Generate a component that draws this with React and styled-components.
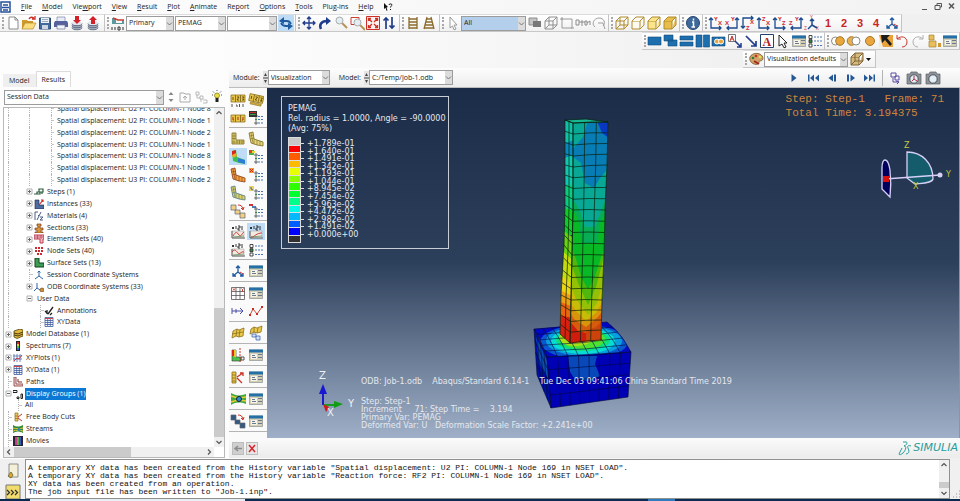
import styled, { createGlobalStyle } from "styled-components";

const GlobalStyle = createGlobalStyle`
  * {
    box-sizing: border-box;
  }

  body {
    margin: 0;
    background: #f0f0f0;
    color: #222;
    font-family: "Open Sans", "Noto Sans", sans-serif;
    font-size: 7px;
    line-height: 10px;
  }

  button,
  select {
    font: inherit;
    color: inherit;
  }

  button {
    padding: 0;
    border: 0;
    background: none;
  }
`;

/* ---------- layout ---------- */

const Window = styled.div`
  display: flex;
  flex-direction: column;
  height: 100vh;
  overflow: hidden;
  background: linear-gradient(90deg, #fdfdfd 20%, #f0f0f0 80%);
`;

const MenuBar = styled.nav`
  display: flex;
  align-items: center;
  gap: 10px;
  height: 14px;
  padding: 0 3px 0 1px;
  background: linear-gradient(90deg, #fdfdfd, #f2f2f2);

  & > button {
    white-space: nowrap;
  }
`;

const WindowControls = styled.div`
  display: flex;
  gap: 1px;
  margin-left: auto;
`;

const ToolRow = styled.div`
  display: flex;
  justify-content: ${(props) => props.$align || "flex-start"};
  height: 18px;
`;

const ToolGroup = styled.div`
  display: flex;
  align-items: center;
  height: 18px;
  padding-right: ${(props) => props.$end || 2}px;
  border-right: 1px solid #c4c4c4;
  border-top: 1px solid #dcdcdc;
  border-bottom: 1px solid #c8c8c8;
  background: linear-gradient(#ffffff, #f1f1f1);
`;

const Grip = styled.span`
  width: 2px;
  height: 12px;
  margin: 0 1px 0 2px;
  border-left: 2px dotted #a8a8a8;
`;

const DockGap = styled.span`
  width: 84px;
`;

const ToolButton = styled.button`
  display: flex;
  align-items: center;
  justify-content: center;
  flex: none;
  width: ${(props) => props.$w || 16}px;
  height: 16px;
  background: ${(props) => (props.$active ? "#bfdcf7" : "none")};

  svg {
    flex: none;
  }
`;

const ViewNumber = styled(ToolButton)`
  color: #c8261c;
  font-family: "Liberation Sans", Arial, sans-serif;
  font-size: 11px;
  font-weight: bold;
`;

const SelectBox = styled.div`
  display: grid;
  grid-template-columns: 1fr 7px;
  width: ${(props) => props.$w}px;
  height: 15px;
  margin-right: 1px;
  border: 1px solid #9c9c9c;
  background: ${(props) => props.$bg || "#fff"};

  select {
    grid-area: 1 / 1 / 2 / 3;
    min-width: 0;
    padding: 0 8px 0 2px;
    border: 0;
    background: transparent;
    appearance: none;
    outline: none;
  }

  svg {
    grid-area: 1 / 2 / 2 / 3;
    width: 7px;
    height: 100%;
    background: #dcdcdc;
    pointer-events: none;
  }
`;

const Body = styled.main`
  display: flex;
  flex: 1;
  min-height: 0;
`;

/* ---------- results tree ---------- */

const Sidebar = styled.aside`
  display: flex;
  flex-direction: column;
  width: 226px;
  padding: 3px 1px 0 3px;
`;

const Tabs = styled.div`
  display: flex;
  align-items: flex-end;
  height: 16px;
`;

const Tab = styled.button`
  height: ${(props) => (props.$active ? 16 : 13)}px;
  padding: 0 5px;
  border: 1px solid ${(props) => (props.$active ? "#dcdcdc" : "#efefef")};
  border-bottom: 0;
  background: ${(props) => (props.$active ? "#fff" : "#efefef")};
`;

const TreeTools = styled.div`
  display: flex;
  align-items: center;
  height: 20px;
  padding-left: 1px;
`;

const TreeBox = styled.div`
  display: grid;
  grid-template-columns: 1fr 10px;
  grid-template-rows: 1fr 10px;
  flex: 1;
  min-height: 0;
  border: 1px solid #b8b8b8;
  background: #fff;
`;

const TreeView = styled.div`
  display: flex;
  overflow: hidden;
`;

const Tree = styled.ul`
  display: flex;
  flex-direction: column;
  flex: 1;
  min-width: 0;
  margin: -5px 0 0;
  padding: 0;
  list-style: none;
`;

const TreeRow = styled.li`
  display: flex;
  align-items: center;
  flex: 1;
  min-height: 0;

  & > svg {
    flex: none;
  }
`;

const Guide = styled.span`
  align-self: stretch;
  flex: none;
  width: ${(props) => props.$w || 17}px;
  margin-left: ${(props) => props.$x || 4}px;
  border-left: 1px dotted #b4b4b4;
`;

const Elbow = styled(Guide)`
  background: linear-gradient(#c4c4c4, #c4c4c4) no-repeat 0 50% / 3px 1px;
`;

const Toggle = styled.button`
  display: flex;
  flex: none;
  justify-content: center;
  width: 9px;
`;

const TreeLabel = styled.span`
  margin-left: 2px;
  padding: 0 1px;
  line-height: 12px;
  white-space: nowrap;
  background: ${(props) => (props.$selected ? "#0a78d4" : "none")};
  color: ${(props) => (props.$selected ? "#fff" : "inherit")};
`;

const ScrollBar = styled.div`
  display: flex;
  flex-direction: ${(props) => (props.$horizontal ? "row" : "column")};
  align-items: center;
  justify-content: space-between;
  background: #f0f0f0;

  span {
    flex: ${(props) => props.$thumb};
    align-self: stretch;
    background: #cbcbcb;
  }

  i {
    flex: ${(props) => props.$rest};
  }
`;

/* ---------- viewport ---------- */

const Workspace = styled.section`
  display: flex;
  flex-direction: column;
  flex: 1;
  min-width: 0;
  padding-left: 3px;
`;

const ContextBar = styled.div`
  display: flex;
  align-items: center;
  height: 20px;
  padding: 0 19px 0 4px;
  background: linear-gradient(#fdfdfd, #ececec);
  border-bottom: 1px solid #bdbdbd;

  label {
    margin-right: 3px;
  }
`;

const ModelPicker = styled.div`
  display: flex;
  align-items: center;
  margin-left: 8px;
`;

const Playback = styled.div`
  display: flex;
  gap: 3px;
  margin-left: auto;
`;

const Divider = styled.span`
  width: 1px;
  margin: 0 1px;
  background: #b4b4b4;
`;

const Stage = styled.div`
  display: flex;
  flex: 1;
  min-height: 0;
`;

const Toolbox = styled.div`
  display: flex;
  flex-direction: column;
  width: 38px;
  padding-top: 1px;
  overflow: hidden;
  background: #fafafa;
`;

const ToolSection = styled.div`
  display: grid;
  grid-template-columns: 18px 18px;
  gap: 1px 0;
  flex: none;
  padding: ${(props) => (props.$loose ? "2px 0 2px" : "2px 0 1px")};
  border-bottom: 1px solid #b4b4b4;

  & > button {
    width: 18px;
    height: 17px;
  }
`;

const Canvas = styled.div`
  position: relative;
  flex: 1;
  border-right: 1px solid #8a94a4;
  background: linear-gradient(#1b2c48 0%, #2d405b 50%, #9fafc8 100%);
  color: #e4e8ee;
  font-family: "DejaVu Sans", Verdana, sans-serif;
  font-size: 8px;
  line-height: 8px;
`;

const Legend = styled.div`
  position: absolute;
  top: 8px;
  left: 14px;
  width: 168px;
  padding: 7px 6px 5px;
  border: 1px solid #c9ced6;
  line-height: 10px;

  p {
    margin: 0;
    white-space: nowrap;
  }
`;

const Scale = styled.div`
  display: flex;
  height: 106px;
  margin-top: 3px;
`;

const Swatches = styled.div`
  display: flex;
  flex-direction: column;
  width: 13px;
  border: 1px solid #dcdcdc;
`;

const Swatch = styled.span`
  flex: 1;
  background: ${(props) => props.$color};

  & + & {
    border-top: 1px solid #dcdcdc;
  }
`;

const Ticks = styled.div`
  display: flex;
  flex-direction: column;
  padding: 3px 0 5px;
`;

const Tick = styled.span`
  display: flex;
  align-items: center;
  gap: 3px;
  flex: 1;
  min-height: 0;
  line-height: 7px;

  &::before {
    content: "";
    width: 3px;
    height: 1px;
    background: #dcdcdc;
  }
`;

const FrameInfo = styled.div`
  position: absolute;
  top: 4px;
  right: 15px;
  color: #cf853c;
  font-family: "Liberation Mono", "Courier New", monospace;
  font-size: 11px;
  line-height: 14px;
  white-space: pre;
`;

const StateBlock = styled.div`
  position: absolute;
  bottom: 8px;
  left: 94px;
  white-space: pre;

  p {
    margin: 0;
  }

  p:first-child {
    margin-bottom: 12px;
  }
`;

const Compass = styled.svg`
  position: absolute;
  top: 50px;
  right: 4px;
  width: 78px;
  height: 64px;
`;

const Triad = styled.svg`
  position: absolute;
  bottom: 16px;
  left: 48px;
  width: 44px;
  height: 54px;
`;

const ModelHolder = styled.div`
  position: absolute;
  inset: 0;
  display: flex;
  justify-content: center;
  padding: 27px 62px 0 0;
  pointer-events: none;

  svg {
    width: 105px;
    height: 297px;
  }
`;

const PromptBar = styled.div`
  display: flex;
  align-items: center;
  gap: 2px;
  height: 20px;
  padding: 0 2px 0 3px;
  background: linear-gradient(#fbfbfb, #ebebeb);
`;

const PromptButton = styled.button`
  display: flex;
  width: 12px;
  height: 13px;
  border: 1px solid #bdbdbd;
  background: ${(props) => props.$bg};
`;

const Brand = styled.div`
  display: flex;
  align-items: center;
  margin-left: auto;
  color: #2a9c9c;
  font-family: "DejaVu Sans", Verdana, sans-serif;
  font-size: 11px;
  font-style: italic;
`;

/* ---------- message area ---------- */

const MessageArea = styled.footer`
  display: flex;
  height: 40px;
  margin-top: 1px;
  background: #f0f0f0;
`;

const MessageButtons = styled.div`
  display: flex;
  flex-direction: column;
  align-items: center;
  justify-content: space-between;
  width: 25px;
  padding-top: 4px;
`;

const MessageLog = styled.div`
  display: grid;
  grid-template-columns: 1fr 10px;
  flex: 1;
  min-width: 0;
  border: 1px solid #8f8f8f;
  background: #fff;

  pre {
    margin: 0;
    padding: 4px 2px 0;
    overflow: hidden;
    color: #111;
    font-family: "Liberation Mono", "Courier New", monospace;
    font-size: 8px;
    line-height: 8px;
  }
`;

const SizeGrip = styled.div`
  display: flex;
  align-items: flex-end;
  width: 10px;
`;

const TaskBar = styled.div`
  display: grid;
  grid-template-columns: 30px 215px 1fr 27px 285px;
  height: 2px;
  background: #0b2a52;

  & > :nth-child(2) {
    background: #e8eef4;
  }

  & > :nth-child(4) {
    background: #2e7cc0;
  }
`;

/* ---------- icons ---------- */

const Svg = ({ size = 16, children }) => (
  <svg width={size} height={size} viewBox={`0 0 ${size} ${size}`} fill="none" aria-hidden="true">
    {children}
  </svg>
);

const Chevron = () => (
  <svg viewBox="0 0 7 12" fill="none" aria-hidden="true">
    <path d="M1 5l2.500 2.500L6 5" stroke="#777" />
  </svg>
);

const Disks = ({ up }) => (
  <>
    <path d="M3 8v4c0 3 10 3 10 0V8z" fill="#a9b0bd" />
    <path d="M3 8.500c0 3 10 3 10 0M3 10.500c0 3 10 3 10 0M3 12.500c0 3 10 3 10 0" stroke="#5c6984" />
    <ellipse cx="8" cy="8" rx="5" ry="2" fill="#e2e5ea" />
    <path d={up ? "M8 1l4 4h-2v4H6V5H4z" : "M6 1h4v4h2L8 9 4 5h2z"} fill="#d3202a" />
  </>
);

const Cube = ({ front = "none", stroke = "#b08a2c", wire }) => (
  <>
    <path d="M2 6h8v8H2z" fill={front} stroke={stroke} />
    <path d="M2 6l4-4h8l-4 4M14 2v8l-4 4" fill={front} stroke={stroke} />
    {wire && <path d="M6 2v8h8M6 10l-4 4" stroke={stroke} />}
  </>
);

const Lens = () => (
  <>
    <path d="M9 8l5 5" stroke="#b4945a" strokeWidth="2" />
    <circle cx="6.500" cy="5.500" r="3.500" fill="#e4edf2" stroke="#a8acb0" />
  </>
);

const axisPaths = {
  normal: "M3 4v9h10M1 5l2-2 2 2M11 11l2 2-2 2",
  flip: "M3 13h10V4M5 11l-2 2 2 2M11 5l2-2 2 2",
  down: "M3 13V3h10M1 11l2 2 2-2M11 1l2 2-2 2",
};

const Axes = ({ a, b, kind = "normal" }) => (
  <>
    <path d={axisPaths[kind]} stroke="#1b4a8f" strokeWidth="1.300" />
    <g fill="#cc3340" fontSize="6" fontWeight="bold">
      <text x={kind === "flip" ? 7 : 6} y={kind === "down" ? 15 : 6}>{a}</text>
      <text x={kind === "flip" ? 1 : 10} y={kind === "down" ? 9 : 10}>{b}</text>
    </g>
  </>
);

const Dialog = () => (
  <>
    <path d="M1.500 3h13v10.500h-13z" fill="#d4cfb4" stroke="#7b8588" strokeWidth=".6" />
    <path d="M1 2.500h14v3H1z" fill="#236fa6" />
    <path d="M3 7h6v5H3z" fill="#f7f5ea" />
    <path d="M4 8.500h3M4 10.500h4M10 7.500h4M10 10.500h4" stroke="#6a7890" strokeWidth="1.200" />
  </>
);

const OptionList = () => (
  <>
    <path d="M2 2.500h3v3H2zM2 11h3v3H2z" fill="#fff" stroke="#222" strokeWidth=".8" />
    <path d="M2 6.700h3v3H2z" fill="#3f8a3c" stroke="#222" strokeWidth=".8" />
    <path d="M7 4h8M7 8h8M7 12.500h8" stroke="#4a76b8" strokeWidth="1.200" strokeDasharray="2 1" />
  </>
);

const SmallList = ({ children }) => (
  <>
    {children}
    <path d="M7 5h2v2H7zM7 12h2v2H7z" stroke="#333" strokeWidth=".7" />
    <path d="M7 8.500h2v2H7z" fill="#3f8a3c" />
    <path d="M10 6.500h5M10 9.500h5M10 13h5" stroke="#4a76b8" strokeDasharray="2 1" />
  </>
);

const Bracket = ({ fill, mesh = "#7c6c1c", bent }) => (
  <>
    <path d={bent ? "M1 2l4-1 1 7 9 3v4l-6-1-6-2z" : "M2 2h4v7h8v4H2z"} fill={fill} stroke={mesh} strokeWidth=".8" />
    <path
      d={bent ? "M2 5l4-1M2 8l4-1M3 2l2 10M6 8v5M9 9v5M12 10v4" : "M2 5h4M2 7.500h4M4 2v11M2 11h12M7 9v4M9.500 9v4M12 9v4"}
      stroke={mesh}
      strokeWidth=".6"
    />
  </>
);

const FrameStrip = ({ tilt }) => (
  <g transform={tilt ? "rotate(12 8 8)" : undefined}>
    <path d="M1 3h14v7H1z" fill="#e8c64a" stroke="#8d7220" strokeWidth=".8" />
    <path d="M5.500 3v7M10.500 3v7" stroke="#8d7220" />
    <path d="M3 5v3M7 5h2l-2 3h2M12 5h2l-1 1.500 1 1.500h-2" stroke="#5c4710" strokeWidth=".9" />
    {tilt ? (
      <path d="M3 11h11v2H3z" fill="#d8ac34" stroke="#8d7220" strokeWidth=".6" />
    ) : (
      <path d="M2 12v3M6 13h1v2M9.500 12v3M13 12v3" stroke="#444" strokeWidth=".9" />
    )}
  </g>
);

const Curve = ({ d }) => (
  <>
    <path d="M2 7h12v7H2z" fill="#f1e9e2" stroke="#a9a9a9" strokeWidth=".6" />
    <path d="M2 3l2 2M4 3L2 5M6 2v3M8 2h2v2H8v2h2M12 2v4" stroke="#222" strokeWidth=".9" />
    <path d="M2 7v7h13" stroke="#666" />
    <path d={d} stroke="#c83c32" />
    <path d="M3 13l11-1" stroke="#4a8a4a" strokeWidth=".7" />
  </>
);

const Frames = ({ fill }) => (
  <>
    <path d="M1 2h5v5H1zM5 7h5v4H5zM10 10h5v5h-5z" fill={fill} stroke="#5f6470" strokeWidth=".7" />
    <path d="M8 2c3 0 4 1 5 4M11 5l2 2 1-3" stroke="#cc3328" />
  </>
);

const Films = ({ d }) => <path d={d} fill="#1d6fae" stroke="#134a7c" strokeWidth=".6" />;

const Camera = ({ mark }) => (
  <>
    <path d="M1 4h3l1-2h6l1 2h3v10H1z" fill="#8d9298" stroke="#5b6066" strokeWidth=".7" />
    <circle cx="8" cy="9" r="4.200" fill="#e3edf5" stroke="#4b5058" />
    {mark && <path d="M8 6v3l-2 2M8 9l3 2" stroke="#b23048" />}
  </>
);

const play = "#245796";

const icons = {
  app: (
    <>
      <path d="M3 3h9v10H3z" fill="#fff" stroke="#26509c" strokeWidth="1.500" />
      <path d="M5 6h5M4 8.500h7M5 11h5" stroke="#26509c" strokeWidth="1.500" />
    </>
  ),
  helpArrow: (
    <>
      <path d="M2 4l4 4-1.500.5 1 3-1 .3-1-3L2 10z" fill="#111" />
      <path d="M7 6c0-1.500 3-1.500 3 0 0 1-1.500 1-1.500 2.500M8.500 10v1" stroke="#111" />
    </>
  ),
  minimize: <path d="M3 9.500h5" stroke="#555" />,
  restore: <path d="M3 5.500h5v4H3zM5 5V3.500h4.500V7H8" stroke="#555" />,
  close: <path d="M4 3.500l5 5M9 3.500l-5 5" stroke="#555" strokeWidth="1.500" />,
  new: <path d="M4 2h6l3 3v9H4zM10 2v3h3" fill="#fff" stroke="#8b8b8b" />,
  open: (
    <>
      <path d="M1 5h5l1 1h5v8H1z" fill="#cf9a2c" />
      <path d="M4 8h11l-3 6H1z" fill="#fadd7c" stroke="#a87c20" strokeWidth=".6" />
      <path d="M8 4c1-2 3-2 5-1M14 1v3h-3" stroke="#cc3026" strokeWidth="1.300" />
    </>
  ),
  save: (
    <>
      <path d="M2.500 3h11v11h-11z" fill="#3f6a9e" stroke="#2b4b76" />
      <path d="M4 3h8v5H4z" fill="#eceff3" />
      <path d="M5 4.500h6M5 6.500h6" stroke="#8d9cb4" strokeWidth=".8" />
      <path d="M5 10h6v4H5z" fill="#ccd5e0" />
    </>
  ),
  print: (
    <>
      <path d="M4 2h8v5H4z" fill="#e6ecf8" stroke="#7c86a4" strokeWidth=".7" />
      <path d="M2 6h12l1 2v4H1V8z" fill="#54619c" />
      <path d="M4 10h8v4H4z" fill="#f2f4fa" stroke="#6a749c" strokeWidth=".7" />
    </>
  ),
  import: <Disks />,
  export: <Disks up />,
  field: (
    <>
      <path d="M2 3h4v5h6V5h2v4H2z" fill="#5c9aa0" />
      <path d="M3 3l5 2h6" stroke="#cc3c30" strokeWidth="1.500" />
      <path d="M2 12v3M5 12v3M8 12h2v3H8zM13 12v3" stroke="#333" />
    </>
  ),
  sync: (
    <>
      <path d="M3 6h6c2 0 3 1 4 3M13 11H8c-3 0-4-1-5-3" stroke="#1d5a9e" strokeWidth="1.800" />
      <path d="M1 6l5-4v7zM15 11l-5 4V8z" fill="#1d5a9e" />
    </>
  ),
  move: <path d="M8 2v12M2 8h12M6 4l2-2 2 2M6 12l2 2 2-2M4 6L2 8l2 2M12 6l2 2-2 2" stroke="#1f3c8c" strokeWidth="1.300" />,
  rotate: (
    <>
      <path d="M4 14c-2-4 0-8 6-8" stroke="#1f3c8c" strokeWidth="2.500" />
      <path d="M9 2l5 4-5 4z" fill="#1f3c8c" />
    </>
  ),
  zoom: <Lens />,
  zoomBox: (
    <>
      <path d="M2 2.500h8v7H2z" stroke="#cc3c30" />
      <g transform="translate(2 2)">
        <Lens />
      </g>
    </>
  ),
  fit: (
    <>
      <path d="M1.500 1.500h13v13h-13z" fill="#fdf0ee" stroke="#cc3026" />
      <path d="M3.500 6V3.500H6M10 3.500h2.500V6M12.500 10v2.500H10M6 12.500H3.500V10M4 4l3 3M12 4L9 7M12 12L9 9M4 12l3-3" stroke="#cc3026" strokeWidth="1.300" />
    </>
  ),
  cycle: <path d="M5 14V3M2.500 5.500L5 3l2.500 2.500M11 2v11M8.500 10.500L11 13l2.500-2.500" stroke="#1f3c8c" strokeWidth="1.700" />,
  ladder: <path d="M4 2v12M12 2v12M4 4h8M4 7h8M4 10h8M4 13h8" stroke="#8c6c2c" strokeWidth="1.300" />,
  ladderPersp: <path d="M6 2L3 14M10 2l3 12M5.500 4h5M5 7h6M4 10h8M3 13h10" stroke="#8c6c2c" strokeWidth="1.300" />,
  pick: <path d="M5 2l7 8H9l2 4-2 .8L7.500 11 5 13z" fill="#fff" stroke="#9a9a9a" />,
  shade: (
    <>
      <path d="M2 3h8v7H2z" fill="#c4c4c4" stroke="#8c8c8c" />
      <path d="M6 6h8v6H6z" fill="#787878" />
    </>
  ),
  ghostCube: <Cube stroke="#909090" wire />,
  ghostBox: <path d="M3 4h10v9H3zM1 4h3M3 2v3M12 13h3" stroke="#9a9a9a" />,
  ghostDots: <path d="M1 5h3v5H1zM4 7h3M7 5v6M7 7h3M10 6h2v4h-2zM12 8l3-2v4" stroke="#8c8c8c" />,
  ghostLoop: <path d="M4 12c-4-3-1-9 4-9s7 5 4 8M7 8h5l2 6" stroke="#a0a0a0" />,
  cubeWire: <Cube wire />,
  cubeHidden: <Cube front="#fdfaf0" />,
  cubeLight: <Cube front="#fbe58c" />,
  cubeFill: <Cube front="#e9bd4a" />,
  info: (
    <>
      <circle cx="8" cy="8" r="6.500" fill="#3c689c" stroke="#24466f" />
      <path d="M8.500 3.500v2M7 7h1.500v5M6.500 12H10" stroke="#fff" strokeWidth="1.500" />
    </>
  ),
  axYX: <Axes a="Y" b="X" />,
  axXY: <Axes a="Y" b="X" kind="flip" />,
  axZX: <Axes a="Z" b="X" kind="down" />,
  axZX2: <Axes a="Z" b="X" />,
  axYZ: <Axes a="Y" b="Z" />,
  axZY: <Axes a="Y" b="Z" kind="flip" />,
  iso: (
    <>
      <path d="M8 5v5l-4 4M8 10l5 3M6 6l2-2 2 2" stroke="#1b4a8f" strokeWidth="1.500" />
      <g fill="#cc3340" fontSize="5">
        <text x="6" y="4">Y</text>
        <text x="0" y="15">Z</text>
        <text x="12" y="15">X</text>
      </g>
    </>
  ),
  csys: (
    <>
      <path d="M8 3v6l-5 4M8 9l5 4M6 5l2-2 2 2M3 10v3h3M10 13h3v-3" stroke="#1d5aa0" strokeWidth="1.300" />
      <path d="M10 9l3 2" stroke="#cc3340" />
    </>
  ),
  winOne: <Films d="M1 4h13v8H1z" />,
  winCascade: <Films d="M1 2h9v6H1zM5 7h9v6H5z" />,
  winRows: <Films d="M1 3h13v4H1zM1 9h13v4H1z" />,
  winCols: <Films d="M1 2h6v12H1zM8.500 2h6v12h-6z" />,
  overlay: (
    <>
      <Films d="M1 4h13v9H1z" />
      <circle cx="6" cy="8.500" r="2.500" fill="#e8a53c" stroke="#fff" />
      <circle cx="10" cy="8.500" r="2.500" stroke="#fff" fill="#e8a53c" />
    </>
  ),
  textArrow: (
    <>
      <path d="M1.500 1.500h7v7h-7z" fill="#fff" stroke="#777" />
      <path d="M3 8l2-5 2 5M4 6h2" stroke="#c02828" />
      <path d="M8 8l6 6M14 10v4h-4" stroke="#1f3c8c" strokeWidth="1.500" />
    </>
  ),
  arrow: <path d="M3 3l10 10M13 8v5H8" stroke="#1f3c8c" strokeWidth="1.700" />,
  textBox: (
    <>
      <path d="M1.500 1.500h13v13h-13z" fill="#fff" stroke="#26406c" />
      <text x="3.500" y="12.500" fill="#b02020" fontSize="12" fontWeight="bold" fontFamily="Liberation Serif">A</text>
    </>
  ),
  cursor: <path d="M4 2l8 8H9l2 4-2 .8L7 11l-3 2z" fill="#fff" stroke="#222" />,
  dialog: <Dialog />,
  list: <OptionList />,
  either: (
    <>
      <circle cx="5.500" cy="8" r="4" fill="#fff" stroke="#8c8c7c" />
      <circle cx="10" cy="8" r="4.300" fill="#e9a83c" stroke="#a5762a" />
    </>
  ),
  both: (
    <>
      <circle cx="5.500" cy="8" r="4.300" fill="#e9b050" stroke="#a5762a" />
      <circle cx="10" cy="8" r="4" fill="#fff" stroke="#8c8c7c" />
    </>
  ),
  dot: <circle cx="8" cy="8" r="4.500" fill="#eaa63c" stroke="#a8762a" />,
  replace: (
    <>
      <path d="M1 2h14v12H1z" fill="#e8a23c" />
      <path d="M1 2l4 12H1z" fill="#f5ead6" />
      <path d="M3 2h9L9 5l5 6-2 2-5-6-3 3z" fill="#1c1c1c" />
    </>
  ),
  undo: <path d="M3 6c4-4 10-2 10 3 0 3-2 5-5 5M3 2v4h4" stroke="#c8382c" />,
  redo: <path d="M13 6C9 2 3 4 3 9c0 3 2 5 5 5M13 2v4H9" stroke="#b0b0b0" />,
  groups: (
    <>
      <path d="M3 2h5v5H3zM3 8h7v6H3z" fill="#e9bd5a" stroke="#a88438" strokeWidth=".7" />
      <path d="M12 10h3v4h-3z" fill="#d39a34" />
    </>
  ),
  palette: (
    <>
      <path d="M2 6c2-5 12-5 13 1 0 4-4 2-4 4s-2 3-5 2-5-4-4-7z" fill="#d2a468" stroke="#77552c" strokeWidth=".8" />
      <circle cx="5" cy="7" r="1.300" fill="#2c7c3c" />
      <circle cx="8" cy="5" r="1.300" fill="#cc2c28" />
      <circle cx="12" cy="6" r="1.300" fill="#e8e04c" />
      <path d="M6 10l5 3" stroke="#a02820" strokeWidth="2" />
    </>
  ),
  cubeBrown: <Cube front="#d6b97c" stroke="#7f6436" wire />,
  caret: <path d="M5 7h5l-2.500 3z" fill="#111" />,
  play: <path d="M5.500 4l5 4-5 4z" fill={play} />,
  first: <path d="M3 4.500h1.500v7H3zM9 4.500v7L5 8zM14 4.500v7L10 8z" fill={play} />,
  prev: <path d="M9 4.500v7L4.500 8zM10 4.500h2v7h-2z" fill={play} />,
  next: <path d="M4 4.500h2v7H4zM7.500 4.500v7L12 8z" fill={play} />,
  last: <path d="M2 4.500v7L6 8zM7 4.500v7l4-3.500zM11.500 4.500H13v7h-1.500z" fill={play} />,
  link: <path d="M4 3h5v4H4zM8 6h4v4H8zM6 8v4h6M9 11l3 1-2 2" stroke="#5a4ca0" />,
  snapshot: <Camera mark />,
  camera: <Camera />,
  updown: <path d="M5.500 6L8 3l2.500 3zM5.500 10L8 13l2.500-3z" fill="#888" />,
  folderUp: <path d="M3 4h4l1 1h5v8H3zM8 11V7M6 9l2-2 2 2" stroke="#aaa" />,
  branch: <path d="M3 3h3v3H3zM7 7h3v3H7zM10 11h4v3h-4M4 6v3h3M8 10v3" stroke="#aaa" strokeWidth=".8" />,
  bulb: (
    <>
      <path d="M8 2v-1M3 6h1M12 6h1M4 2.500l1 1M12 2.500l-1 1" stroke="#555" />
      <circle cx="8" cy="6.500" r="2.500" fill="#e9e23c" stroke="#77731c" strokeWidth=".7" />
      <path d="M6.500 9h3v4h-3z" fill="#222" />
    </>
  ),
  frames: <FrameStrip />,
  framesTilt: <FrameStrip tilt />,
  framesRow: (
    <>
      <path d="M1 5h14v7H1z" fill="#e8c64a" stroke="#8d7220" strokeWidth=".8" />
      <path d="M5.500 5v7M10.500 5v7" stroke="#8d7220" />
      <path d="M3 7v3h1M8 7v3M13 7v3h-1" stroke="#a8301c" />
    </>
  ),
  superimpose: (
    <SmallList>
      <path d="M1 1h8v6H1z" fill="#333" />
      <path d="M2 2.500h6" stroke="#cc3328" />
      <path d="M2 4.500h6" stroke="#3ca04c" />
    </SmallList>
  ),
  undeformed: <Bracket fill="#e3d47c" />,
  deformed: <Bracket fill="#e3d47c" bent />,
  contour: (
    <>
      <path d="M2 2l4-1 1 7 8 3v4l-6-1-6-2z" fill="#3cc04c" />
      <path d="M2 2l4-1v4l-4 2z" fill="#d8281c" />
      <path d="M2 6l4-2 1 3-4 2z" fill="#eaa82c" />
      <path d="M8 9l7 2v4l-7-2z" fill="#2c7cd8" />
    </>
  ),
  contourList: (
    <SmallList>
      <path d="M1 1h5v5H1z" fill="#48b448" />
      <path d="M1 1h3v3H1z" fill="#d8421c" />
      <path d="M4 2h3v2H4z" fill="#e9d83c" />
    </SmallList>
  ),
  symbols: <Bracket fill="#f1a13c" mesh="#8c3c1c" bent />,
  symbolList: (
    <SmallList>
      <path d="M1 1h5v5H1z" fill="#f1a03c" />
      <path d="M2 2l3 3M5 2L2 5" stroke="#cc2818" />
    </SmallList>
  ),
  orient: <Bracket fill="#e3ce5c" mesh="#4c7c8c" bent />,
  orientList: (
    <SmallList>
      <path d="M1 1h5v5H1z" fill="#ecd05c" />
      <path d="M3 2v2l2 1" stroke="#3c6c9c" />
    </SmallList>
  ),
  multi: <Frames fill="#f1cf84" />,
  multiList: (
    <SmallList>
      <path d="M1 1h4v2H1z" fill="#cc3338" />
      <path d="M4 3h4v2H4z" fill="#4c7cbc" />
    </SmallList>
  ),
  timeHistory: <Curve d="M3 12c3-5 4-4 6-1s3-2 5-3" />,
  scaleFactor: <Curve d="M3 13c4 0 5-4 11-4" />,
  harmonic: <Curve d="M2 10c3-4 4-1 6 1s3-2 6-1" />,
  table: (
    <>
      <path d="M1.500 2.500h13v12h-13zM6 2.500v12M10 2.500v12M1.500 6.500h13M1.500 10.500h13" fill="#fff" stroke="#555" strokeWidth=".8" />
      <path d="M3 3.500l2 2M5 3.500l-2 2M11.500 3.500l1 1 1-1M12.500 4.500v2" stroke="#cc3328" />
    </>
  ),
  query: <path d="M2 5v6M2 8h11M10 5l3 3-3 3M6 6v4" stroke="#4c4ca8" />,
  xyCurve: (
    <>
      <path d="M2 12l3-6 4 5 5-7" stroke="#cc4438" />
      <path d="M1 11h2v2H1zM4 5h2v2H4zM8 10h2v2H8zM13 3h2v2h-2z" fill="#cc2c20" />
    </>
  ),
  wave: <path d="M3 6l4-2 2 1 5-2-1 8-4 1-3-1-4 2zM7 4l-1 7M10 5l-1 7M2 9l11-2" fill="#e9c84c" stroke="#8c7018" strokeWidth=".8" />,
  waveLink: (
    <>
      <path d="M3 4l3-2 3 1 5-2-1 6-4 1-3-1-4 2zM6 2v6M10 3l-1 5" fill="#e9c84c" stroke="#8c7018" strokeWidth=".8" />
      <path d="M4 9h4v3H4zM8 11h4v4H8z" fill="#d6e2f7" stroke="#4468b0" strokeWidth=".8" />
    </>
  ),
  viewCut: (
    <>
      <path d="M2 3h4v7h5v4H2z" fill="#4cc04c" stroke="#333" strokeWidth=".6" />
      <path d="M2 3h2v6H2z" fill="#d8281c" />
      <path d="M4 3h2v7H4z" fill="#eac82c" />
      <path d="M11 10h3v3h-3z" stroke="#555" />
      <path d="M10 1v14" stroke="#cc3328" strokeDasharray="2 1" />
    </>
  ),
  bodyCut: (
    <>
      <path d="M2 3h4v11H2zM2 6h4M2 9h4M2 12h4" fill="#e6c348" stroke="#8c7018" strokeWidth=".8" />
      <path d="M7 8l6-4M7 9l5 5M10 4h3v3" stroke="#cc3328" strokeWidth="1.300" />
    </>
  ),
  stream: (
    <>
      <path d="M1 2c5 3 9 3 15 1v10c-6-2-10-2-15 1z" fill="#3fa844" />
      <path d="M1 5c5 2 10 2 15 1M1 11c5-2 10-2 15-1" stroke="#e9cc2c" strokeWidth="1.500" />
      <circle cx="9" cy="8" r="2.500" fill="#2c8cd8" stroke="#123" />
    </>
  ),
  movieFrames: <Frames fill="#335a80" />,
  tail: <path d="M3 4h9M3 5c2 2 3 0 3 4M9 6v2" stroke="#333" strokeWidth="1.500" />,
  msgDoc: (
    <>
      <path d="M4 1h9v13H4z" fill="#f3efd8" stroke="#777" strokeWidth=".8" />
      <path d="M3 13l3-4 2 3-2 3z" fill="#e0a82c" stroke="#553" strokeWidth=".7" />
    </>
  ),
  msgCli: (
    <>
      <path d="M1 2h14v14H1z" fill="#f2dc6c" stroke="#777" />
      <path d="M2 7l2.500 2.500L2 12M6 7l2.500 2.500L6 12M10 7l2.500 2.500L10 12" stroke="#333" strokeWidth="1.300" />
    </>
  ),
};

const treeIcons = {
  steps: <path d="M0 7h3v-2h2v-3h4v3H6v2H3M8 5v2" stroke="#2c5c3c" strokeWidth="1.200" />,
  instances: (
    <>
      <path d="M1 1h4v5h5v4H1z" fill="#4c6ca4" stroke="#223" strokeWidth=".6" />
      <path d="M5 6l4-5M7 1h2v2" stroke="#cc2c24" strokeWidth="1.200" />
    </>
  ),
  materials: <path d="M1 1v8M1 1h3M3 9l4-8M6 6h3L6 9h3M4 4l1 1" stroke="#4c5c84" />,
  sections: <path d="M3 1h4v2H6v2h3v2H7v2h2v1H1V9h2V7H1V5h3V3H3z" fill="#d6963c" stroke="#7c3c1c" strokeWidth=".7" />,
  elements: (
    <>
      <path d="M0 1h10v4h-1v4H6V5H0z" fill="#f3bcc4" stroke="#b83c50" />
      <path d="M3.500 1v4M7 1v4M0 3h10" stroke="#b83c50" strokeWidth=".7" />
    </>
  ),
  nodes: <path d="M1 2h9M1 5h9M3 8h5" stroke="#cc2c30" strokeWidth="2" strokeDasharray="2 1" />,
  surfaces: <path d="M1 0h4v5h5v4H1z" fill="#3c9c54" stroke="#14401f" />,
  csys: <path d="M5 1v5L1 9M5 6l4 3M3.500 2.500L5 1l1.500 1.500" stroke="#2c64a8" />,
  odbCsys: (
    <>
      <path d="M3 1v5L0 9M3 6l3 2" stroke="#2c64a8" />
      <circle cx="8" cy="8" r="2" fill="#d09030" stroke="#643c14" strokeWidth=".6" />
    </>
  ),
  annotation: <path d="M1 5l3 3M4 8l5-7M6 9l2-2M3 4v4" stroke="#222" strokeWidth="1.300" />,
  xydata: (
    <>
      <path d="M1 .5h8v9H1zM3.700 1v8M6.300 1v8M1 3.500h8M1 5.500h8M1 7.500h8" fill="#fff" stroke="#3c5c9c" strokeWidth=".8" />
      <path d="M1 1.500h8" stroke="#cc4450" />
    </>
  ),
  database: (
    <>
      <path d="M1 2l6-2 3 1v6L4 9.500 1 8z" fill="#e2b73c" stroke="#4c3c0c" strokeWidth=".8" />
      <path d="M1 4l4 1 5-2M1 6l4 1 5-2" stroke="#4c3c0c" />
    </>
  ),
  spectrum: (
    <>
      <path d="M3 0h4v10H3z" fill="#222" />
      <path d="M4 1h2v2H4z" fill="#e3281c" />
      <path d="M4 3h2v2H4z" fill="#ead02c" />
      <path d="M4 5h2v2H4z" fill="#3cc84c" />
      <path d="M4 7h2v2H4z" fill="#2c6ce0" />
    </>
  ),
  xyplot: (
    <>
      <path d="M1 1v8M4 1v8M7 1v8M0 3h9M0 6h9" stroke="#4c70b0" strokeWidth=".8" />
      <path d="M1 8l3-3 2 1 3-4" stroke="#cc3c48" />
    </>
  ),
  path: (
    <>
      <path d="M1 0h2v7h7v2H1z" fill="#f6dcd8" stroke="#7c2c2c" strokeWidth=".8" />
      <path d="M5 2v3h4" stroke="#7c2c2c" />
    </>
  ),
  display: <path d="M0 1.500h4v2H0zM4 8h2v1.500H4zM8 5h1.500v4.500H8z" stroke="#222" />,
  cut: (
    <>
      <path d="M2 1h3v8H2zM2 4h3M2 6.500h3" fill="#ecc95c" stroke="#8c6c1c" strokeWidth=".7" />
      <path d="M5 5l4-3M5 6l4 3" stroke="#cc3328" />
    </>
  ),
  streams: (
    <>
      <path d="M0 1c3 2 6 2 10 0v8c-4-2-7-2-10 0z" fill="#338c3c" />
      <path d="M0 4c4 1 6 1 10 0M0 7c4-1 6-1 10 0" stroke="#e9c82c" />
      <circle cx="6" cy="5.500" r="1.500" fill="#2c7cc8" />
    </>
  ),
  movies: (
    <>
      <path d="M0 0h10v10H0z" fill="#2c2434" />
      <path d="M2 1h2v8H2z" fill="#cc3c8c" />
      <path d="M4 1h2v8H4z" fill="#4cb848" />
      <path d="M6 1h2v8H6z" fill="#3c58c0" />
    </>
  ),
};

const Tool = ({ name, ...rest }) => (
  <ToolButton type="button" aria-label={name} {...rest}>
    <Svg>{icons[name]}</Svg>
  </ToolButton>
);

const Tools = ({ names }) => names.map((name) => <Tool key={name} name={name} />);

const Select = ({ label, value, id, ...rest }) => (
  <SelectBox {...rest}>
    <select id={id} aria-label={label} defaultValue={value}>
      <option>{value}</option>
    </select>
    <Chevron />
  </SelectBox>
);

const arrowPaths = {
  up: "M2.500 6L5 3.500 7.500 6",
  down: "M2.500 4L5 6.500 7.500 4",
  left: "M6 2.500L3.500 5 6 7.500",
  right: "M4 2.500L6.500 5 4 7.500",
};

const Arrow = ({ dir }) => (
  <Svg size={10}>
    <path d={arrowPaths[dir]} stroke="#555" strokeWidth="1.200" />
  </Svg>
);

const Spinner = () => (
  <svg width="5" height="14" viewBox="0 0 5 14" aria-hidden="true">
    <path d="M0 0h5v14H0z" fill="#e4e4e4" />
    <path d="M1 5l1.500-3L4 5zM1 9l1.500 3L4 9zM0 6.500h5v1H0z" fill="#444" />
  </svg>
);

/* ---------- data ---------- */

const menus = [
  ["", "F", "ile"],
  ["", "M", "odel"],
  ["Vie", "w", "port"],
  ["", "V", "iew"],
  ["", "R", "esult"],
  ["", "P", "lot"],
  ["", "A", "nimate"],
  ["Re", "p", "ort"],
  ["", "O", "ptions"],
  ["", "T", "ools"],
  ["Plu", "g", "-ins"],
  ["", "H", "elp"],
];

const treeRows = [
  { kind: "history", text: "Spatial displacement: U2 PI: COLUMN-1 Node 8" },
  { kind: "history", text: "Spatial displacement: U2 PI: COLUMN-1 Node 1" },
  { kind: "history", text: "Spatial displacement: U2 PI: COLUMN-1 Node 2" },
  { kind: "history", text: "Spatial displacement: U3 PI: COLUMN-1 Node 1" },
  { kind: "history", text: "Spatial displacement: U3 PI: COLUMN-1 Node 8" },
  { kind: "history", text: "Spatial displacement: U3 PI: COLUMN-1 Node 1" },
  { kind: "history", text: "Spatial displacement: U3 PI: COLUMN-1 Node 2" },
  { kind: "odb", toggle: "+", icon: "steps", text: "Steps (1)" },
  { kind: "odb", toggle: "+", icon: "instances", text: "Instances (33)" },
  { kind: "odb", toggle: "+", icon: "materials", text: "Materials (4)" },
  { kind: "odb", toggle: "+", icon: "sections", text: "Sections (33)" },
  { kind: "odb", toggle: "+", icon: "elements", text: "Element Sets (40)" },
  { kind: "odb", toggle: "+", icon: "nodes", text: "Node Sets (40)" },
  { kind: "odb", toggle: "+", icon: "surfaces", text: "Surface Sets (13)" },
  { kind: "odb", icon: "csys", text: "Session Coordinate Systems" },
  { kind: "odb", toggle: "+", icon: "odbCsys", text: "ODB Coordinate Systems (33)" },
  { kind: "odb", toggle: "-", text: "User Data" },
  { kind: "user", icon: "annotation", text: "Annotations" },
  { kind: "user", icon: "xydata", text: "XYData" },
  { kind: "root", toggle: "+", icon: "database", text: "Model Database (1)" },
  { kind: "root", toggle: "+", icon: "spectrum", text: "Spectrums (7)" },
  { kind: "root", toggle: "+", icon: "xyplot", text: "XYPlots (1)" },
  { kind: "root", toggle: "+", icon: "xydata", text: "XYData (1)" },
  { kind: "root", icon: "path", text: "Paths" },
  { kind: "root", toggle: "-", icon: "display", text: "Display Groups (1)", selected: true },
  { kind: "child", text: "All" },
  { kind: "root", icon: "cut", text: "Free Body Cuts" },
  { kind: "root", icon: "streams", text: "Streams" },
  { kind: "root", icon: "movies", text: "Movies" },
];

const toolSections = [
  ["frames", "framesTilt", "framesRow", "superimpose"],
  [
    "undeformed", "deformed", "contour", "contourList", "symbols",
    "symbolList", "orient", "orientList", "multi", "multiList",
  ],
  ["timeHistory", "scaleFactor", "harmonic", "list"],
  ["csys", "dialog"],
  ["table", "dialog", "query", "xyCurve"],
  ["wave", "waveLink"],
  ["viewCut", "dialog"],
  ["bodyCut", "dialog"],
  ["stream", "dialog"],
  ["movieFrames", "dialog"],
  ["tail"],
];

const activeTools = ["contour", "scaleFactor"];

const swatches = [
  "#c8c8c8", "#ff0000", "#ff5d00", "#ffb900", "#e8ff00", "#8bff00", "#2eff00",
  "#00ff2e", "#00ff8b", "#00ffe8", "#00b9ff", "#005dff", "#0000ff", "#303030",
];

const levels = [
  "+1.789e-01", "+1.640e-01", "+1.491e-01", "+1.342e-01", "+1.193e-01", "+1.044e-01",
  "+8.945e-02", "+7.454e-02", "+5.963e-02", "+4.472e-02", "+2.982e-02", "+1.491e-02", "+0.000e+00",
];

const messages = `A temporary XY data has been created from the History variable "Spatial displacement: U2 PI: COLUMN-1 Node 169 in NSET LOAD".
A temporary XY data has been created from the History variable "Reaction force: RF2 PI: COLUMN-1 Node 169 in NSET LOAD".
XY data has been created from an operation.
The job input file has been written to "Job-1.inp".`;

/* ---------- deformed mesh ---------- */

const along = (edge, t) => {
  const pos = t * (edge.length - 1);
  const i = Math.min(Math.floor(pos), edge.length - 2);
  const f = pos - i;
  return [0, 1].map((k) => edge[i][k] + (edge[i + 1][k] - edge[i][k]) * f);
};

// grid lines between two opposite edges; sag bends the cross lines
const meshPath = (left, right, rows, cols, sag = 0) => {
  let d = "";
  for (let r = 0; r <= rows; r++) {
    const [a, b] = along(left, r / rows);
    const [c, e] = along(right, r / rows);
    d += `M${a} ${b}Q${(a + c) / 2} ${(b + e) / 2 + sag} ${c} ${e}`;
  }
  for (let c = 0; c <= cols; c++) {
    for (let r = 0; r <= rows; r++) {
      const p = along(left, r / rows);
      const q = along(right, r / rows);
      const t = c / cols;
      d += `${r ? "L" : "M"}${p[0] + (q[0] - p[0]) * t} ${p[1] + (q[1] - p[1]) * t + 2 * sag * t * (1 - t)}`;
    }
  }
  return d;
};

const outer = [[35, 5], [35, 50], [35, 90], [34, 130], [31, 180], [30, 219]];
const corner = [[43, 8], [43, 52], [43, 95], [42, 140], [41, 185], [40, 228]];
const rightEdge = [[78, 7], [77, 50], [75, 95], [74, 140], [72, 185], [71, 225]];
const topLeft = [[4, 214], [9, 223], [13, 232], [17, 242]];
const topRight = [[77, 207], [86, 215], [94, 225], [101, 237]];

const shape = (a, b) => [...a, ...[...b].reverse()].map((p) => p.join(",")).join(" ");

const Model = () => (
  <svg viewBox="0 0 105 297" role="img" aria-label="PEMAG contour on deformed column">
    <defs>
      <clipPath id="front">
        <polygon points={shape(corner, rightEdge)} />
      </clipPath>
      <clipPath id="side">
        <polygon points={shape(outer, corner)} />
      </clipPath>
      <clipPath id="top">
        <polygon points={shape(topLeft, topRight)} />
      </clipPath>
    </defs>

    <polygon points="4,214 17,242 21,293 7,260" fill="#0010a8" />
    <path d="M6 222l12 25 1 18-10-17z" fill="#0a50b4" />
    <polygon points="17,242 101,237 98,282 21,293" fill="#0000b4" />
    <path d="M38 241h29l-2 8 5 12-12 5-14-3-4-6z" fill="#0848b8" />

    <g clipPath="url(#top)">
      <path d="M0 200h105v50H0z" fill="#0008c4" />
      <ellipse cx="54" cy="227" rx="44" ry="17" fill="#0858d0" />
      <ellipse cx="54" cy="226" rx="38" ry="15" fill="#08a0dc" />
      <ellipse cx="53" cy="226" rx="32" ry="13" fill="#08dcd4" />
      <ellipse cx="53" cy="225" rx="27" ry="11" fill="#10e078" />
      <ellipse cx="53" cy="224" rx="22" ry="10" fill="#50e030" />
      <ellipse cx="46" cy="223" rx="17" ry="8" fill="#a8e018" />
    </g>

    <path
      d={
        meshPath(topLeft, topRight, 5, 8, 2) +
        meshPath([[17, 242], [21, 293]], [[101, 237], [98, 282]], 4, 8) +
        meshPath([[4, 214], [7, 260]], [[17, 242], [21, 293]], 4, 4)
      }
      fill="none"
      stroke="#04083c"
      strokeWidth=".6"
    />

    <g clipPath="url(#side)">
      <path d="M28 0h20v45H28z" fill="#10c0a8" />
      <path d="M28 30l20-6v14l-20 8z" fill="#0888c0" />
      <path d="M28 45l20-6v36H28z" fill="#10c8b0" />
      <path d="M28 70h20v26H28z" fill="#08cc80" />
      <path d="M28 92l20 4v24H28z" fill="#10cc28" />
      <path d="M28 112l20 14v20H28z" fill="#68d414" />
      <path d="M28 132l20 18v30H28z" fill="#c4dc10" />
      <path d="M28 158l20 16v14H28z" fill="#ecd410" />
      <path d="M28 174l20 10v16H28z" fill="#f0a010" />
      <path d="M28 186l20 8v14H28z" fill="#ec6410" />
      <path d="M28 200l20 4v30H28z" fill="#d82010" />
    </g>

    <g clipPath="url(#front)">
      <path d="M38 0h42v240H38z" fill="#08a894" />
      <path d="M58 6h22v45l-10 12-6 10-9-5-4-20-8-6v-8l10-12z" fill="#087cb4" />
      <path d="M67 6h13v18l-8-6z" fill="#0838c0" />
      <path d="M38 76l12 20 5 16h10l6-16 9-24v160H38z" fill="#08ac54" />
      <path d="M38 86l10 18 4 24h15l3-20 10-18v150H38z" fill="#08b824" />
      <path d="M38 124l8 20 6 20 6 10 6-10 8-24 6-12v110H38z" fill="#50b80c" />
      <path d="M38 140l10 28 10 22 8-18 8-30 4-6v100H38z" fill="#94c008" />
      <path d="M38 164l8 20 12 16 9-12 7-24 4-4v80H38z" fill="#c8bc08" />
      <path d="M38 184l8 12 10 10 10-8 8-14v56H38z" fill="#d8940c" />
      <path d="M38 194l6 10 12 8 12-10 6-8v50H38z" fill="#d45c0c" />
      <path d="M38 204l10 12 8 2v14H38z" fill="#d01c0c" />
      <path d="M56 216l10-4 8-8v26H56z" fill="#cc440c" />
    </g>
    <polygon points="35,5 56,4 78,7 43,8" fill="#18b890" stroke="#0a2018" strokeWidth=".8" />

    <path
      d={meshPath(corner, rightEdge, 20, 3, -1) + meshPath(outer, corner, 20, 2)}
      fill="none"
      stroke="#08200c"
      strokeWidth=".7"
    />
  </svg>
);

/* ---------- parts ---------- */

const TreeItem = ({ kind, toggle, icon, text, selected }) => (
  <TreeRow>
    {kind === "history" && (
      <>
        <Guide />
        <Guide />
        <Elbow $x={5} $w={3} />
      </>
    )}
    {kind === "odb" && <Guide />}
    {kind === "user" && (
      <>
        <Guide />
        <Elbow $x={15} $w={4} />
      </>
    )}
    {kind === "child" && <Elbow $x={14} $w={4} />}
    {toggle && (
      <Toggle type="button" aria-label={`Toggle ${text}`}>
        <Svg size={7}>
          <path d="M1 1h5v5H1z" fill="#fff" stroke="#b0b0b0" />
          <path d={toggle === "+" ? "M2 3.500h3M3.500 2v3" : "M2 3.500h3"} stroke="#666" />
        </Svg>
      </Toggle>
    )}
    {!toggle && (kind === "odb" || kind === "root") && <Elbow $x={4} $w={5} />}
    {icon && <Svg size={10}>{treeIcons[icon]}</Svg>}
    <TreeLabel $selected={selected}>{text}</TreeLabel>
  </TreeRow>
);

const ResultsTree = () => (
  <Sidebar>
    <Tabs role="tablist">
      <Tab type="button" role="tab">Model</Tab>
      <Tab type="button" role="tab" $active>Results</Tab>
    </Tabs>
    <TreeTools>
      <Select label="Tree contents" value="Session Data" $w={161} />
      <Tool name="updown" $w={12} />
      <Tool name="folderUp" />
      <Tool name="branch" />
      <Tool name="bulb" />
    </TreeTools>
    <TreeBox>
      <TreeView>
        <Tree>
          {treeRows.map((row, i) => (
            <TreeItem key={i} {...row} />
          ))}
        </Tree>
      </TreeView>
      <ScrollBar $thumb={127} $rest={186}>
        <Arrow dir="up" />
        <i />
        <span />
        <Arrow dir="down" />
      </ScrollBar>
      <ScrollBar $horizontal $thumb={117} $rest={73}>
        <Arrow dir="left" />
        <span />
        <i />
        <Arrow dir="right" />
      </ScrollBar>
    </TreeBox>
  </Sidebar>
);

const Viewport = () => (
  <Canvas>
    <ModelHolder>
      <Model />
    </ModelHolder>
    <Legend>
      <p>PEMAG</p>
      <p>Rel. radius = 1.0000, Angle = -90.0000</p>
      <p>(Avg: 75%)</p>
      <Scale>
        <Swatches>
          {swatches.map((color) => (
            <Swatch key={color} $color={color} />
          ))}
        </Swatches>
        <Ticks>
          {levels.map((level) => (
            <Tick key={level}>{level}</Tick>
          ))}
        </Ticks>
      </Scale>
    </Legend>
    <FrameInfo>{"Step: Step-1   Frame: 71\nTotal Time: 3.194375"}</FrameInfo>
    <Compass viewBox="0 0 78 64" fill="none">
      <path d="M30 14c15 0 26 11 26 27-1 4-9 4-18 5l-8-6z" fill="#145c6c" stroke="#d6d0f6" strokeWidth="1.300" />
      <path d="M5 30c0-11 6-11 8 2 1 9 1 18 0 27l-8-8z" fill="#00005c" stroke="#d6d0f6" strokeWidth="1.300" />
      <path d="M8 41l55-4" stroke="#d6d0f6" strokeWidth="1.300" />
      <path d="M6 38h6v6H6z" fill="#d8100c" />
      <circle cx="63" cy="37" r="2.500" fill="#d6d0f6" />
      <g fill="#c8c83c" fontSize="8">
        <text x="27" y="10">Z</text>
        <text x="69" y="39">Y</text>
        <text x="36" y="51">X</text>
      </g>
    </Compass>
    <Triad viewBox="0 0 44 54">
      <path d="M8 37V24" stroke="#1c1cc8" strokeWidth="2" />
      <path d="M8 16l4 10H4z" fill="#1818d0" />
      <path d="M9 37h10" stroke="#189c1c" strokeWidth="2" />
      <path d="M28 36l-9 4v-7z" fill="#109c14" />
      <path d="M8 36l6 3-3 5z" fill="#d01818" />
      <g fill="#f0f2f6" fontSize="10">
        <text x="4" y="11">Z</text>
        <text x="33" y="39">Y</text>
        <text x="12" y="48">X</text>
      </g>
    </Triad>
    <StateBlock>
      <p>{"ODB: Job-1.odb    Abaqus/Standard 6.14-1    Tue Dec 03 09:41:06 China Standard Time 2019"}</p>
      <p>Step: Step-1</p>
      <p>{"Increment     71: Step Time =    3.194"}</p>
      <p>Primary Var: PEMAG</p>
      <p>{"Deformed Var: U   Deformation Scale Factor: +2.241e+00"}</p>
    </StateBlock>
  </Canvas>
);

const MainToolbar = () => (
  <ToolRow>
    <ToolGroup $end={3}>
      <Grip />
      <Tools names={["new", "open", "save", "print", "import", "export"]} />
    </ToolGroup>
    <ToolGroup $end={1}>
      <Grip />
      <Tool name="field" />
      <Select label="Output type" value="Primary" $w={48} />
      <Select label="Output variable" value="PEMAG" $w={51} />
      <Select label="Component" value="" $w={50} />
      <Tool name="sync" $active />
    </ToolGroup>
    <ToolGroup>
      <Grip />
      <Tools names={["move", "rotate", "zoom", "zoomBox", "fit", "cycle"]} />
    </ToolGroup>
    <ToolGroup>
      <Grip />
      <Tools names={["ladder", "ladderPersp"]} />
    </ToolGroup>
    <ToolGroup $end={1}>
      <Grip />
      <Tool name="pick" />
      <Select label="Selection filter" value="All" $w={65} $bg="#b3cfec" />
      <Tools names={["shade", "ghostCube", "ghostBox", "ghostDots", "ghostLoop"]} />
    </ToolGroup>
    <ToolGroup $end={1}>
      <Grip />
      <Tools names={["cubeWire", "cubeHidden", "cubeLight", "cubeFill"]} />
    </ToolGroup>
    <ToolGroup $end={1}>
      <Grip />
      <Tool name="info" />
    </ToolGroup>
    <ToolGroup $end={1}>
      <Grip />
      <Tools names={["axYX", "axXY", "axZX", "axZX2", "axYZ", "axZY", "iso"]} />
      {[1, 2, 3, 4].map((n) => (
        <ViewNumber key={n} type="button">{n}</ViewNumber>
      ))}
      <Tool name="csys" />
    </ToolGroup>
  </ToolRow>
);

const App = () => {
  return (
    <Window>
      <GlobalStyle />
      <MenuBar>
        <Tool name="app" $w={10} />
        {menus.map(([before, key, after]) => (
          <button type="button" key={before + key + after}>
            {before}
            <u>{key}</u>
            {after}
          </button>
        ))}
        <Tool name="helpArrow" $w={12} />
        <WindowControls>
          {["minimize", "restore", "close"].map((name) => (
            <button type="button" key={name} aria-label={name}>
              <Svg size={12}>{icons[name]}</Svg>
            </button>
          ))}
        </WindowControls>
      </MenuBar>

      <MainToolbar />
      <ToolRow $align="flex-end">
        <ToolGroup $end={1}>
          <Grip />
          <Tools names={["winOne", "winCascade", "winRows", "winCols", "overlay"]} />
          <Tools names={["textArrow", "arrow", "textBox", "cursor", "dialog", "list"]} />
        </ToolGroup>
        <ToolGroup $end={1}>
          <Grip />
          <Tools names={["either", "both", "dot", "replace", "undo", "redo", "groups", "dialog"]} />
        </ToolGroup>
      </ToolRow>
      <ToolRow $align="flex-end">
        <ToolGroup>
          <Grip />
          <Tool name="palette" />
          <Select label="Color code" value="Visualization defaults" $w={84} />
          <Tool name="cubeBrown" />
          <Tool name="caret" $w={8} />
        </ToolGroup>
        <DockGap />
      </ToolRow>

      <Body>
        <ResultsTree />
        <Workspace>
          <ContextBar>
            <label htmlFor="module">Module:</label>
            <Spinner />
            <Select id="module" value="Visualization" $w={62} />
            <ModelPicker>
              <label htmlFor="model">Model:</label>
              <Spinner />
              <Select id="model" value="C:/Temp/Job-1.odb" $w={84} />
            </ModelPicker>
            <Playback>
              <Tools names={["play", "first", "prev", "next", "last"]} />
              <Divider />
              <Tools names={["link", "snapshot", "camera"]} />
            </Playback>
          </ContextBar>
          <Stage>
            <Toolbox>
              {toolSections.map((names, i) => (
                <ToolSection key={i} $loose={i > 2}>
                  {names.map((name) => (
                    <Tool key={name} name={name} $active={activeTools.includes(name)} />
                  ))}
                </ToolSection>
              ))}
            </Toolbox>
            <Viewport />
          </Stage>
          <PromptBar>
            <PromptButton type="button" aria-label="Previous" $bg="#cfcfcf">
              <Svg size={10}>
                <path d="M9 5.500H3M5 3L2 5.500 5 8" stroke="#8c8c8c" strokeWidth="1.500" />
              </Svg>
            </PromptButton>
            <PromptButton type="button" aria-label="Cancel" $bg="#e6e6e6">
              <Svg size={10}>
                <path d="M2 2l6 7M8 2L2 9" stroke="#d8242c" strokeWidth="1.500" />
              </Svg>
            </PromptButton>
            <Brand>
              <Svg size={16}>
                <path
                  d="M6 2h3c2 0 1 3-2 4 3 0 2 4-1 7-2 2-4 2-4 1l3-6M14 6c-3-1-4 0-3 2 1 3 2 5-2 6"
                  stroke="#2a9c9c"
                />
              </Svg>
              SIMULIA
            </Brand>
          </PromptBar>
        </Workspace>
      </Body>

      <MessageArea>
        <MessageButtons>
          <Tool name="msgDoc" />
          <Tool name="msgCli" />
        </MessageButtons>
        <MessageLog>
          <pre role="log">{messages}</pre>
          <ScrollBar $thumb={5} $rest={9}>
            <Arrow dir="up" />
            <i />
            <span />
            <Arrow dir="down" />
          </ScrollBar>
        </MessageLog>
        <SizeGrip>
          <Svg size={10}>
            <path d="M3 8h1M6 8h1M6 5h1M9 8h1M9 5h1M9 2h1" stroke="#999" />
          </Svg>
        </SizeGrip>
      </MessageArea>
      <TaskBar>
        <i />
        <i />
        <i />
        <i />
      </TaskBar>
    </Window>
  );
};

export default App;
